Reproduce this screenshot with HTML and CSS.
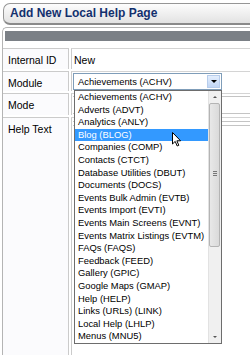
FILE: index.html
```html
<!DOCTYPE html>
<html lang="en">
<head>
    <meta charset="UTF-8">
    <meta name="viewport" content="width=device-width, initial-scale=1.0">
    <title>Add New Local Help Page</title>
    <link rel="stylesheet" href="styles.css">
</head>
<body>
    <div class="title-bar">
        <h1>Add New Local Help Page</h1>
    </div>
    <div class="panel">
        <div class="panel-head"></div>
        <div class="form">
            <div class="label">Internal ID</div>
            <div class="value">New</div>

            <div class="label">Module</div>
            <div class="value">
                <div class="select">
                    <span class="select-text">Achievements (ACHV)</span>
                    <span class="select-btn"><span class="arrow-down"></span></span>
                    <div class="dropdown">
                        <ul class="options">
                            <li>Achievements (ACHV)</li>
                            <li>Adverts (ADVT)</li>
                            <li>Analytics (ANLY)</li>
                            <li class="active">Blog (BLOG)</li>
                            <li>Companies (COMP)</li>
                            <li>Contacts (CTCT)</li>
                            <li>Database Utilities (DBUT)</li>
                            <li>Documents (DOCS)</li>
                            <li>Events Bulk Admin (EVTB)</li>
                            <li>Events Import (EVTI)</li>
                            <li>Events Main Screens (EVNT)</li>
                            <li>Events Matrix Listings (EVTM)</li>
                            <li>FAQs (FAQS)</li>
                            <li>Feedback (FEED)</li>
                            <li>Gallery (GPIC)</li>
                            <li>Google Maps (GMAP)</li>
                            <li>Help (HELP)</li>
                            <li>Links (URLs) (LINK)</li>
                            <li>Local Help (LHLP)</li>
                            <li>Menus (MNU5)</li>
                        </ul>
                        <div class="scrollbar">
                            <span class="sb-up"></span>
                            <span class="sb-thumb"><span class="grip"></span></span>
                            <span class="sb-down"></span>
                        </div>
                        <svg class="cursor" width="10" height="15" viewBox="0 0 10 15">
                            <path d="M0.5 0.5 L0.5 12 L3.2 9.4 L5.2 14 L6.8 13.3 L4.9 8.8 L8.6 8.8 Z" fill="#fff" stroke="#000" stroke-width="1" stroke-linejoin="round"/>
                        </svg>
                    </div>
                </div>
            </div>

            <div class="label">Mode</div>
            <div class="value">
                <div class="mode-box"></div>
            </div>

            <div class="label">Help Text</div>
            <div class="value">
                <div class="editor">
                    <div class="editor-bar"></div>
                </div>
            </div>
        </div>
    </div>
</body>
</html>
```

FILE: styles.css
```css
body {
    margin: 0;
    height: 356px;
    background: #fff;
    font-family: "Liberation Sans", Arial, sans-serif;
    color: #000;
    overflow: hidden;
}
.title-bar {
    margin: 3px 0 0 3px;
    height: 19px;
    border: 1px solid #969696;
    border-right: none;
    border-bottom: 2px solid #8a8a8a;
    border-radius: 7px 0 0 7px;
    background: linear-gradient(#fdfdfd, #e2e2e2);
}
.title-bar h1 {
    margin: 0;
    padding-left: 6px;
    font-size: 12px;
    line-height: 19px;
    color: #13306e;
}
.panel {
    margin: 2px 0 0 2px;
    border: 1px solid #b4b4b4;
    border-right: none;
    border-bottom: none;
    border-radius: 5px 0 0 0;
    padding: 3px 0 0 0;
}
.panel-head {
    height: 10px;
    margin-left: 2px;
    background: #7b8086;
}
.form {
    display: grid;
    grid-template-columns: 66px 1fr;
    grid-template-rows: 21px 20px 22px 238px;
    gap: 2px;
    margin-top: 7px;
}
.label {
    border: 1px solid #cbcbcb;
    border-left: none;
    border-bottom: none;
    background: #fbfbfd;
    font-size: 10.5px;
    line-height: 12px;
    padding: 5px 0 0 5px;
}
.value {
    min-width: 0;
    border-top: 1px solid #d4d4d4;
    border-left: 1px solid #cbcbcb;
    font-size: 10.5px;
    line-height: 12px;
    padding: 5px 0 0 2px;
}
.value:has(.select),
.value:has(.mode-box),
.value:has(.editor) {
    padding: 1px 0 0 1px;
}
.select {
    position: relative;
    width: 147px;
    height: 15px;
    border: 1px solid #7f9db9;
    background: #fff;
    display: flex;
    align-items: center;
}
.select-text {
    flex: 1;
    padding-left: 4px;
    font-size: 9.4px;
    line-height: 15px;
}
.select-btn {
    width: 13px;
    height: 13px;
    margin-right: 1px;
    border: 1px solid #b7cdec;
    box-sizing: border-box;
    background: linear-gradient(#e3eefd, #c1d6f5);
    display: flex;
    align-items: center;
    justify-content: center;
}
.arrow-down {
    border-left: 3px solid transparent;
    border-right: 3px solid transparent;
    border-top: 3px solid #000;
}
.dropdown {
    position: absolute;
    top: 16px;
    left: 0;
    width: 146px;
    height: 252px;
    border: 1px solid #6d6d6d;
    background: #fff;
    display: flex;
    z-index: 2;
}
.options {
    list-style: none;
    margin: 0;
    padding: 0;
    flex: 1;
}
.options li {
    height: 12.6px;
    line-height: 12.6px;
    padding-left: 3px;
    font-size: 9.4px;
    white-space: nowrap;
}
.options li.active {
    background: #3399ff;
    color: #fff;
}
.scrollbar {
    position: relative;
    width: 13px;
    background: #f0f0f0;
    border-left: 1px solid #e2e2e2;
    box-sizing: border-box;
}
.sb-up,
.sb-down {
    position: absolute;
    left: 4px;
    border-left: 2px solid transparent;
    border-right: 2px solid transparent;
}
.sb-up {
    top: 5px;
    border-bottom: 2px solid #555;
}
.sb-down {
    bottom: 5px;
    border-top: 2px solid #555;
}
.sb-thumb {
    position: absolute;
    top: 12px;
    left: 0;
    width: 11px;
    height: 144px;
    border: 1px solid #b4b4b4;
    border-radius: 2px;
    background: linear-gradient(90deg, #e8e8e8, #dadada);
    box-sizing: border-box;
}
.grip {
    position: absolute;
    top: 67px;
    left: 3px;
    width: 4px;
    height: 5px;
    background: repeating-linear-gradient(#777 0 1px, transparent 1px 2px);
}
.cursor {
    position: absolute;
    left: 97px;
    top: 41px;
}
.mode-box {
    height: 16px;
    margin-top: 1px;
    border-top: 1px solid #c4c4c4;
    border-bottom: 1px solid #c4c4c4;
}
.editor {
    margin-top: 2px;
    height: 230px;
    border-top: 1px solid #c4c4c4;
}
.editor-bar {
    height: 3px;
    border-bottom: 1px solid #c4c4c4;
}
```
